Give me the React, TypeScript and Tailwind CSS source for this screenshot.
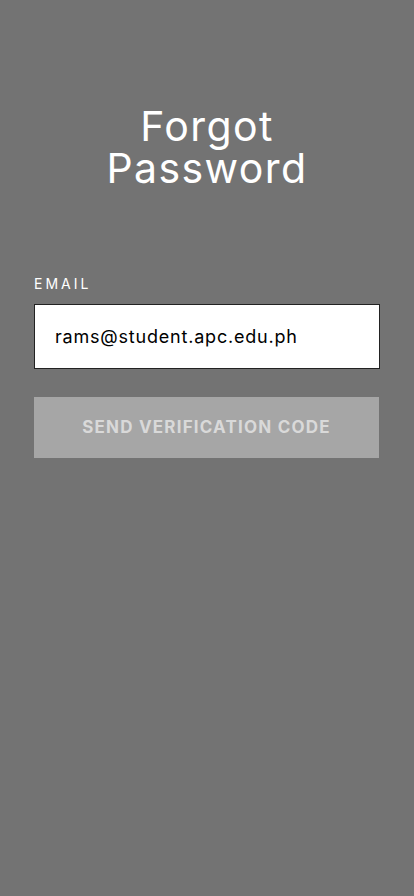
export default function App() {
  return (
    <div className="min-h-[896px] w-full bg-[#737373] px-[34px] pt-[105px] font-['Inter','Open_Sans',sans-serif]">
      <h1 className="text-center text-[41px] font-normal leading-[42px] tracking-[1.4px] text-white">
        Forgot
        <br />
        Password
      </h1>

      <div className="mt-[86px]">
        <label className="block text-[14px] leading-[18px] tracking-[3px] text-white">EMAIL</label>
        <input
          type="email"
          defaultValue="rams@student.apc.edu.ph"
          className="mt-[11px] block h-[65px] w-[346px] border border-[#222] bg-white pl-[20px] text-[18px] tracking-[0.8px] text-black outline-none"
        />
        <button className="mt-[28px] block h-[61px] w-[345px] bg-[#a6a6a6] text-[17px] font-bold tracking-[1.2px] text-[#d9d9d9]">
          SEND VERIFICATION CODE
        </button>
      </div>
    </div>
  );
}
